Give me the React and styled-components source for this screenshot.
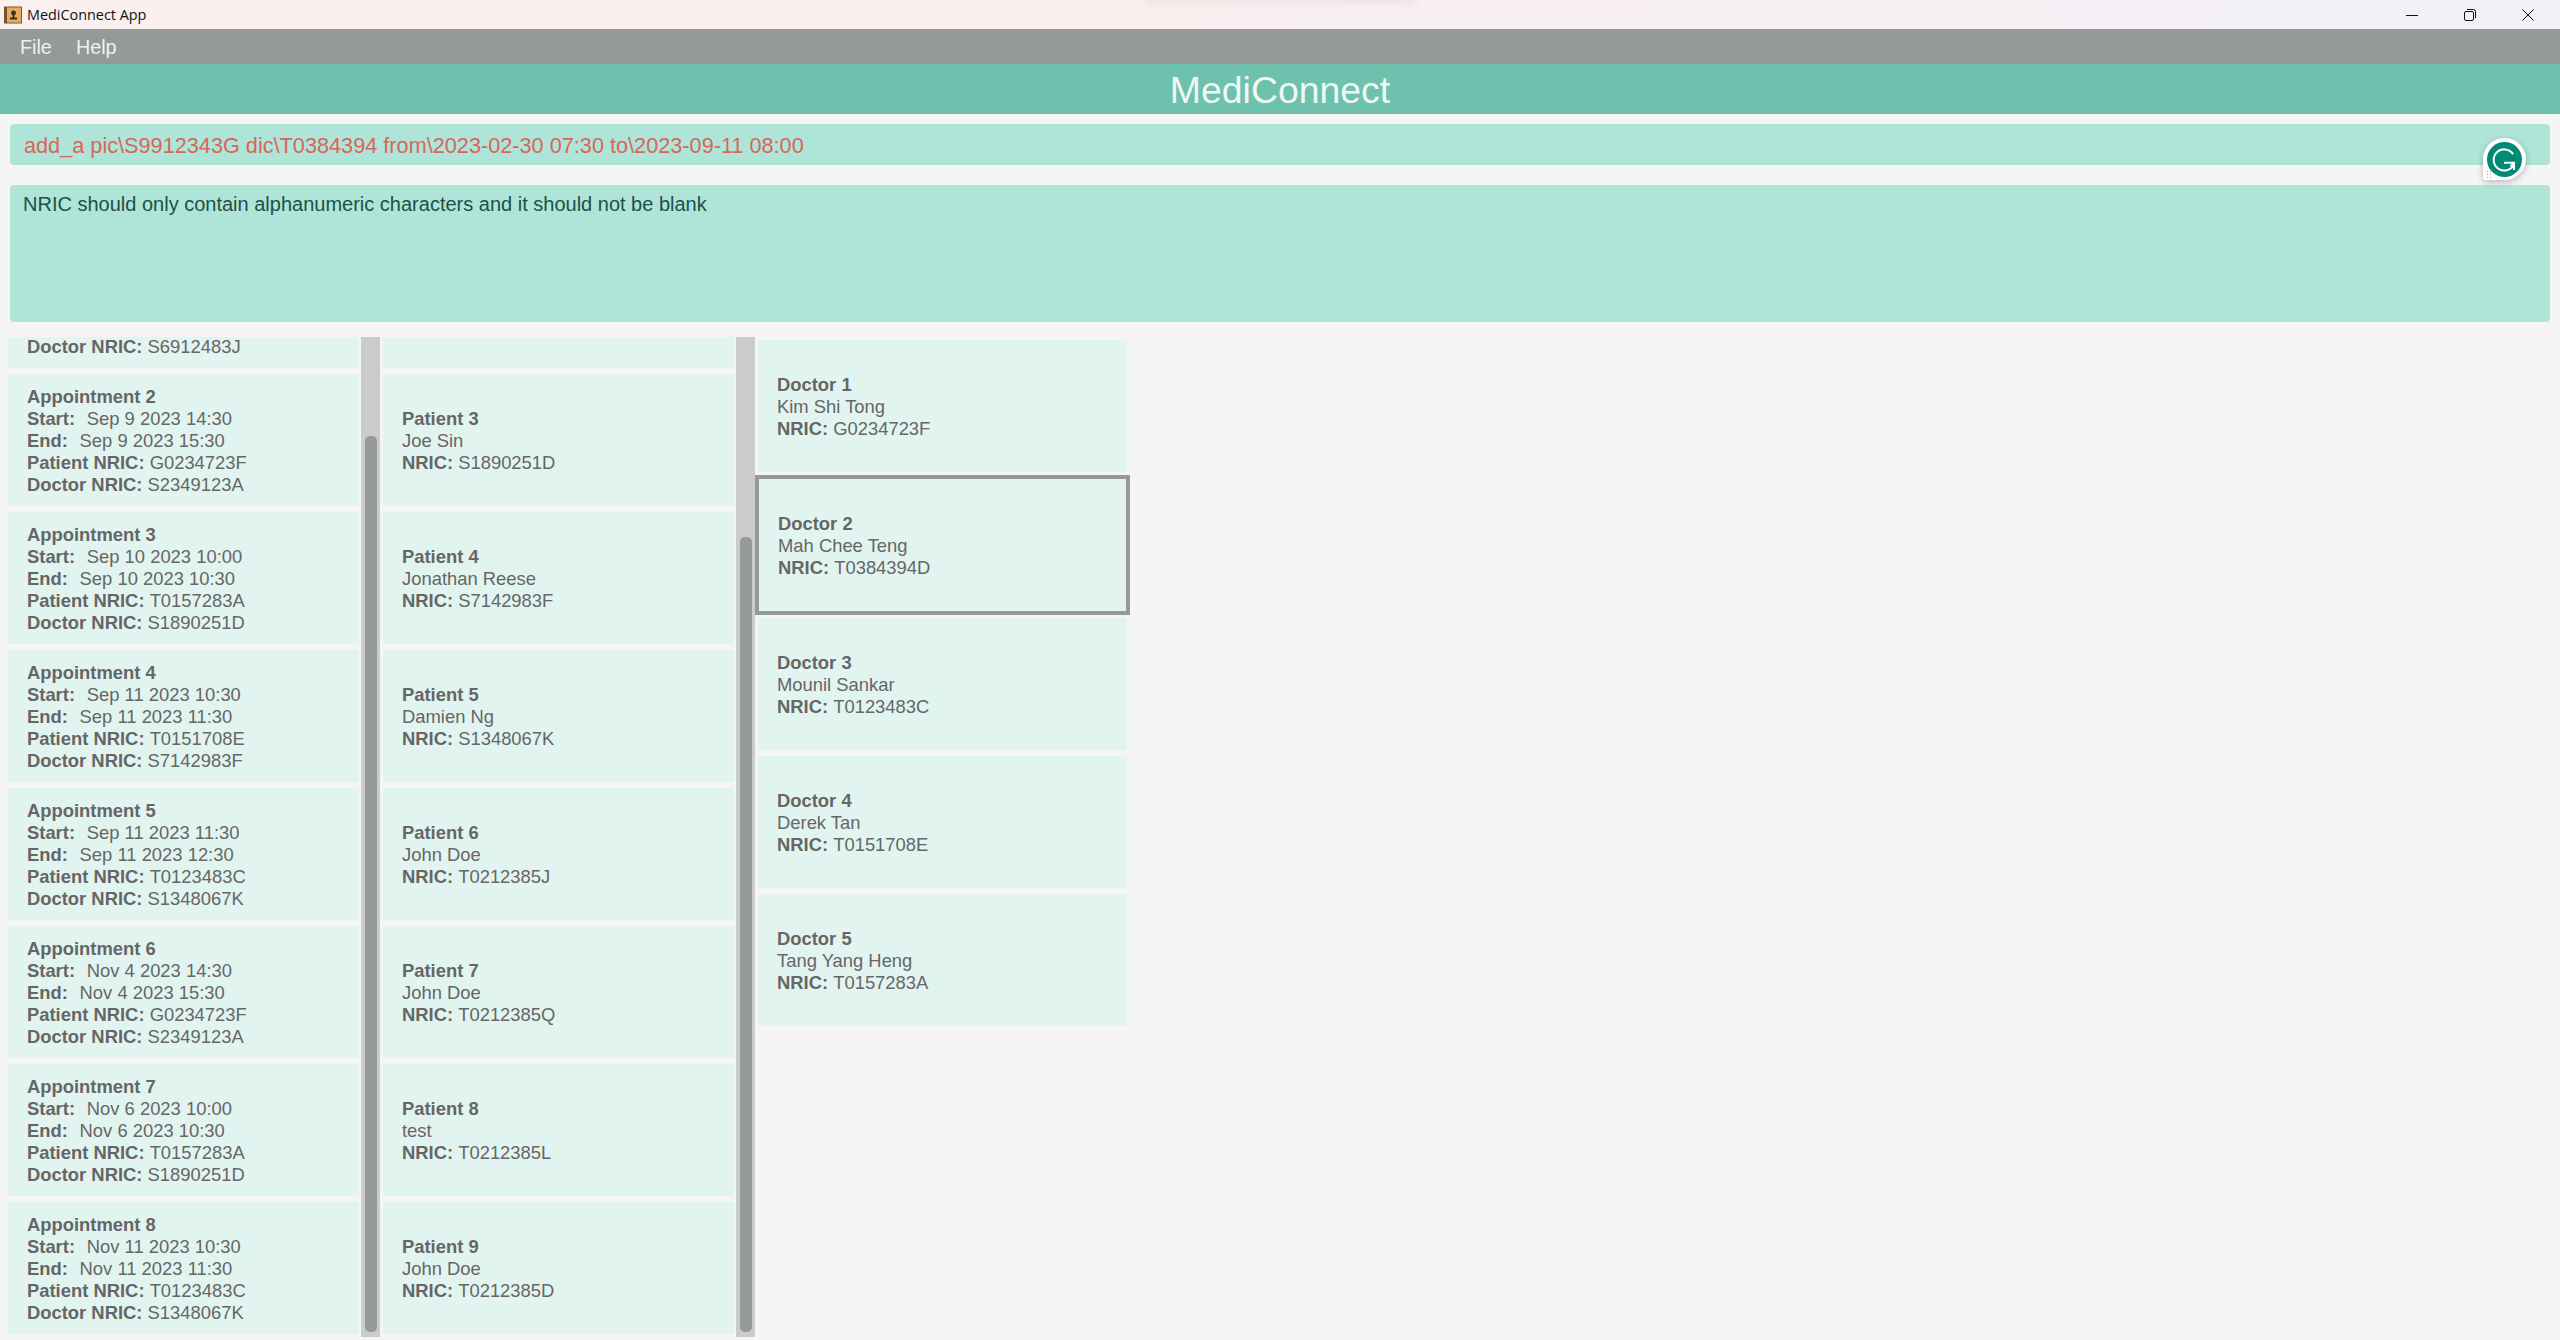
import React from 'react'
import styled, { createGlobalStyle } from 'styled-components'

const GlobalStyle = createGlobalStyle`
  html, body {
    margin: 0;
    padding: 0;
    background: #f5f5f5;
  }
  * {
    box-sizing: border-box;
  }
`

const Page = styled.div`
  position: relative;
  width: 2560px;
  height: 1340px;
  overflow: hidden;
  display: flex;
  flex-direction: column;
  background: #f5f5f5;
  font-family: 'Liberation Sans', Arial, sans-serif;
`

const TitleBar = styled.div`
  position: relative;
  height: 29px;
  flex: none;
  display: flex;
  align-items: center;
  padding-left: 4px;
  background: linear-gradient(90deg, #faf0ee 0%, #f9eff0 50%, #f2f1f8 100%);
`

const PeekShadow = styled.div`
  position: absolute;
  left: 1145px;
  top: -12px;
  width: 270px;
  height: 12px;
  box-shadow: 0 2px 8px rgba(120, 90, 90, 0.1);
`

const AppName = styled.span`
  margin-left: 5px;
  font-family: 'Open Sans', sans-serif;
  font-size: 14.4px;
  color: #111;
`

const WindowButtons = styled.div`
  margin-left: auto;
  display: flex;
  align-items: center;
  gap: 46px;
  padding-right: 26px;
`

const MenuBar = styled.div`
  height: 35px;
  flex: none;
  display: flex;
  align-items: center;
  gap: 24px;
  padding: 1px 0 0 20px;
  background: #959997;
`

const MenuItem = styled.span`
  font-size: 19.8px;
  color: #f0f0f0;
`

const Header = styled.div`
  height: 50px;
  flex: none;
  display: flex;
  align-items: center;
  justify-content: center;
  padding-top: 2px;
  background: #6ec1ad;
  font-size: 37.4px;
  color: #eef8f5;
`

const CommandBox = styled.div`
  height: 41px;
  flex: none;
  margin: 10px 10px 0 10px;
  padding: 2px 0 0 14px;
  display: flex;
  align-items: center;
  border-radius: 4px;
  background: #aee5d8;
  font-size: 21.7px;
  color: #d9655a;
`

const ResultBox = styled.div`
  height: 137px;
  flex: none;
  margin: 20px 10px 0 10px;
  padding: 7px 13px;
  border-radius: 4px;
  background: #aee5d8;
  font-size: 20px;
  line-height: 24px;
  color: #1f4f47;
`

const Lists = styled.div`
  flex: 1;
  min-height: 0;
  display: flex;
  margin-top: 15px;
  padding-left: 8px;
`

const ScrollColumn = styled.div`
  display: flex;
  height: 1000px;
  margin-right: 3px;
  gap: 2px;
`

const CardStack = styled.div`
  width: 351px;
  display: flex;
  flex-direction: column;
  gap: 6px;
`

const DoctorStack = styled.div`
  width: 375px;
  display: flex;
  flex-direction: column;
  gap: 6px;
  padding-top: 3px;
  margin-left: -3px;
`

const Card = styled.div`
  height: 132px;
  flex: none;
  padding: 2px 19px 0 19px;
  display: flex;
  flex-direction: column;
  justify-content: center;
  background: #e2f4f0;
  font-size: 18.4px;
  line-height: 22px;
  color: #666666;
  white-space: pre;
`

const CutCard = styled(Card)`
  height: 31px;
  justify-content: flex-end;
  padding-bottom: 10px;
`

const DoctorCard = styled(Card)`
  margin: ${p => (p.$selected ? '-3px 0' : '0 3px')};
  height: ${p => (p.$selected ? '140px' : '132px')};
  border: ${p => (p.$selected ? '4px solid #959997' : 'none')};
`

const Line = styled.div``

const Label = styled.b`
  font-weight: 700;
  margin-right: ${p => (p.$wide ? '1.5px' : '0')};
`

const Track = styled.div`
  width: 19px;
  height: 1000px;
  padding-top: ${p => p.$top}px;
  padding-bottom: 5px;
  display: flex;
  justify-content: center;
  background: #cacccb;
`

const Thumb = styled.div`
  width: 12px;
  height: 100%;
  border-radius: 5px;
  background: #959997;
`

const GrammarlyBadge = styled.div`
  position: absolute;
  left: 2483px;
  top: 138px;
  width: 43px;
  height: 42px;
  display: flex;
  align-items: center;
  justify-content: center;
  background: #fff;
  border-radius: 50% 50% 50% 3px;
  box-shadow: 0 2px 6px rgba(0, 0, 0, 0.25);
`

const BadgeDots = styled.span`
  position: absolute;
  left: 3px;
  bottom: 2px;
  width: 5px;
  height: 8px;
  background-image: radial-gradient(#9a9aa8 0.7px, transparent 0.9px);
  background-size: 3px 3px;
`

const appointments = [
  ['2', 'Sep 9 2023 14:30', 'Sep 9 2023 15:30', 'G0234723F', 'S2349123A'],
  ['3', 'Sep 10 2023 10:00', 'Sep 10 2023 10:30', 'T0157283A', 'S1890251D'],
  ['4', 'Sep 11 2023 10:30', 'Sep 11 2023 11:30', 'T0151708E', 'S7142983F'],
  ['5', 'Sep 11 2023 11:30', 'Sep 11 2023 12:30', 'T0123483C', 'S1348067K'],
  ['6', 'Nov 4 2023 14:30', 'Nov 4 2023 15:30', 'G0234723F', 'S2349123A'],
  ['7', 'Nov 6 2023 10:00', 'Nov 6 2023 10:30', 'T0157283A', 'S1890251D'],
  ['8', 'Nov 11 2023 10:30', 'Nov 11 2023 11:30', 'T0123483C', 'S1348067K'],
]

const patients = [
  ['3', 'Joe Sin', 'S1890251D'],
  ['4', 'Jonathan Reese', 'S7142983F'],
  ['5', 'Damien Ng', 'S1348067K'],
  ['6', 'John Doe', 'T0212385J'],
  ['7', 'John Doe', 'T0212385Q'],
  ['8', 'test', 'T0212385L'],
  ['9', 'John Doe', 'T0212385D'],
]

const doctors = [
  ['1', 'Kim Shi Tong', 'G0234723F'],
  ['2', 'Mah Chee Teng', 'T0384394D'],
  ['3', 'Mounil Sankar', 'T0123483C'],
  ['4', 'Derek Tan', 'T0151708E'],
  ['5', 'Tang Yang Heng', 'T0157283A'],
]

const AppIcon = () => (
  <svg width="18" height="18" viewBox="0 0 18 18">
    <rect x="0.5" y="1" width="17" height="16" fill="#e3ad5b" stroke="#7a5a33" />
    <rect x="0.5" y="1" width="2.5" height="16" fill="#6b5238" />
    <circle cx="9.5" cy="7" r="2.4" fill="#3d2c1a" />
    <path d="M8.6 8.5h1.8v3h2.6v2H6v-2h2.6z" fill="#3d2c1a" />
  </svg>
)

const MinimizeIcon = () => (
  <svg width="12" height="12" viewBox="0 0 12 12">
    <path d="M0 6.5h12" stroke="#111" strokeWidth="1" />
  </svg>
)

const RestoreIcon = () => (
  <svg width="12" height="12" viewBox="0 0 12 12" fill="none" stroke="#111" strokeWidth="1">
    <rect x="0.5" y="2.5" width="9" height="9" rx="1.5" />
    <path d="M3 0.5h6.5a2 2 0 0 1 2 2V9" />
  </svg>
)

const CloseIcon = () => (
  <svg width="12" height="12" viewBox="0 0 12 12">
    <path d="M0.5 0.5l11 11M11.5 0.5l-11 11" stroke="#111" strokeWidth="1" />
  </svg>
)

const GrammarlyIcon = () => (
  <svg width="35" height="35" viewBox="0 0 35 35">
    <circle cx="17.5" cy="17.5" r="17.5" fill="#008a74" />
    <path
      d="M25.6 11.4A10.6 10.6 0 1 0 26 24"
      fill="none"
      stroke="#fff"
      strokeWidth="2"
      strokeLinecap="round"
    />
    <path
      d="M17 20.7h10v7.3M27 20.9l-3.6 3.6"
      fill="none"
      stroke="#fff"
      strokeWidth="2"
    />
  </svg>
)

const AppointmentLines = ({ item }) => (
  <>
    <Line>
      <Label>Appointment {item[0]}</Label>
    </Line>
    <Line>
      <Label $wide>Start: </Label> {item[1]}
    </Line>
    <Line>
      <Label $wide>End: </Label> {item[2]}
    </Line>
    <Line>
      <Label>Patient NRIC: </Label>
      {item[3]}
    </Line>
    <Line>
      <Label>Doctor NRIC: </Label>
      {item[4]}
    </Line>
  </>
)

const PersonLines = ({ kind, item }) => (
  <>
    <Line>
      <Label>
        {kind} {item[0]}
      </Label>
    </Line>
    <Line>{item[1]}</Line>
    <Line>
      <Label>NRIC: </Label>
      {item[2]}
    </Line>
  </>
)

const App = () => {
  return (
    <Page>
      <GlobalStyle />
      <TitleBar>
        <PeekShadow />
        <AppIcon />
        <AppName>MediConnect App</AppName>
        <WindowButtons>
          <MinimizeIcon />
          <RestoreIcon />
          <CloseIcon />
        </WindowButtons>
      </TitleBar>
      <MenuBar>
        <MenuItem>File</MenuItem>
        <MenuItem>Help</MenuItem>
      </MenuBar>
      <Header>MediConnect</Header>
      <CommandBox>
        {'add_a pic\\S9912343G dic\\T0384394 from\\2023-02-30 07:30 to\\2023-09-11 08:00'}
      </CommandBox>
      <ResultBox>
        NRIC should only contain alphanumeric characters and it should not be blank
      </ResultBox>
      <Lists>
        <ScrollColumn>
          <CardStack>
            <CutCard>
              <Line>
                <Label>Doctor NRIC: </Label>
                S6912483J
              </Line>
            </CutCard>
            {appointments.map(item => (
              <Card key={item[0]}>
                <AppointmentLines item={item} />
              </Card>
            ))}
          </CardStack>
          <Track $top={99}>
            <Thumb />
          </Track>
        </ScrollColumn>
        <ScrollColumn>
          <CardStack>
            <CutCard />
            {patients.map(item => (
              <Card key={item[0]}>
                <PersonLines kind="Patient" item={item} />
              </Card>
            ))}
          </CardStack>
          <Track $top={200}>
            <Thumb />
          </Track>
        </ScrollColumn>
        <DoctorStack>
          {doctors.map(item => (
            <DoctorCard key={item[0]} $selected={item[0] === '2'}>
              <PersonLines kind="Doctor" item={item} />
            </DoctorCard>
          ))}
        </DoctorStack>
      </Lists>
      <GrammarlyBadge>
        <GrammarlyIcon />
        <BadgeDots />
      </GrammarlyBadge>
    </Page>
  )
}

export default App
